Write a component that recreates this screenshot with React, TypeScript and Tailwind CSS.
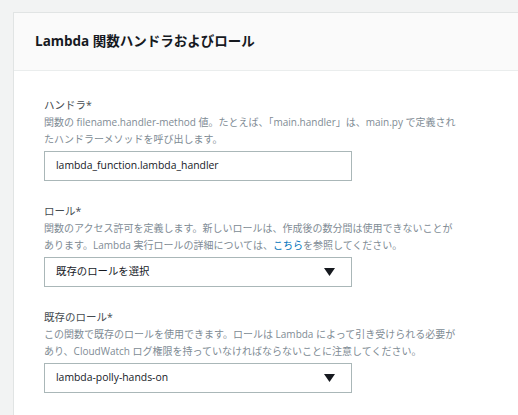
import React from "react";

const font = {
  fontFamily: '"Open Sans", "Noto Sans CJK JP", sans-serif',
};

function Arrow() {
  return (
    <svg width="11" height="8" viewBox="0 0 11 8" className="block">
      <path d="M0 0 H11 L5.5 8 Z" fill="#16191f" />
    </svg>
  );
}

function Field({
  label,
  lines,
  children,
}: {
  label: string;
  lines: React.ReactNode[];
  children: React.ReactNode;
}) {
  return (
    <div className="flex flex-col">
      <div className="text-[10.5px] leading-[18px] text-[#444b50]">{label}</div>
      <div className="text-[10px] leading-[17px] text-[#808b94] whitespace-nowrap mb-[3px]">
        {lines.map((l, i) => (
          <div key={i}>{l}</div>
        ))}
      </div>
      {children}
    </div>
  );
}

function Select({ value }: { value: string }) {
  return (
    <div className="w-[308px] h-[30px] border border-[#aab7b8] bg-white flex items-center justify-between pl-[11px] pr-[16px] text-[10.4px] text-[#16191f]">
      <span>{value}</span>
      <Arrow />
    </div>
  );
}

export default function App() {
  return (
    <div className="w-[518px] h-[415px] bg-[#f2f3f3] overflow-hidden pt-[12px] pl-[13px]" style={font}>
      <div className="bg-white border-l border-t border-[#e1e4e4] h-full w-[520px]">
        <div className="h-[58px] bg-[#fafafa] border-b border-[#eaeded] flex items-center pl-[21px]">
          <h2 className="text-[13.5px] font-bold text-[#16191f]">Lambda 関数ハンドラおよびロール</h2>
        </div>
        <div className="pl-[30px] pt-[25px] flex flex-col gap-[21px]">
          <Field
            label="ハンドラ*"
            lines={[
              "関数の filename.handler-method 値。たとえば、「main.handler」は、main.py で定義され",
              "たハンドラーメソッドを呼び出します。",
            ]}
          >
            <div className="w-[308px] h-[30px] border border-[#aab7b8] bg-white flex items-center pl-[11px] text-[10.4px] text-[#16191f]">
              lambda_function.lambda_handler
            </div>
          </Field>
          <Field
            label="ロール*"
            lines={[
              "関数のアクセス許可を定義します。新しいロールは、作成後の数分間は使用できないことが",
              <>
                あります。Lambda 実行ロールの詳細については、
                <span className="text-[#0073bb]">こちら</span>を参照してください。
              </>,
            ]}
          >
            <Select value="既存のロールを選択" />
          </Field>
          <Field
            label="既存のロール*"
            lines={[
              "この関数で既存のロールを使用できます。ロールは Lambda によって引き受けられる必要が",
              "あり、CloudWatch ログ権限を持っていなければならないことに注意してください。",
            ]}
          >
            <Select value="lambda-polly-hands-on" />
          </Field>
        </div>
      </div>
    </div>
  );
}
